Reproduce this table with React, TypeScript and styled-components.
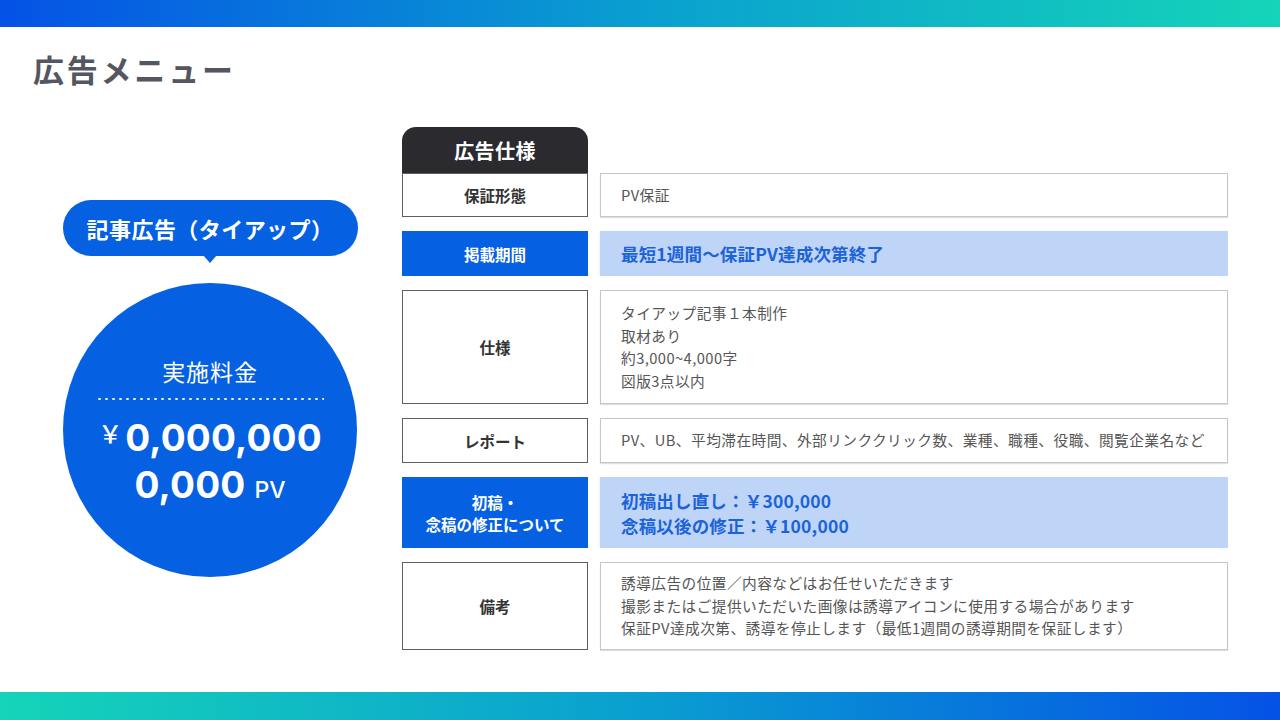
import React from "react";
import styled, { createGlobalStyle } from "styled-components";

const GlobalStyle = createGlobalStyle`
  html, body { margin: 0; padding: 0; background: #ffffff; }
  body { font-family: "Noto Sans CJK JP", "Noto Sans", sans-serif; }
  * { box-sizing: border-box; }
`;

const BLUE = "#0660e2";
const LIGHT_BLUE = "#bfd5f8";
const BLUE_TEXT = "#1c63d8";

const Page = styled.div`
  width: 1280px;
  height: 720px;
  display: flex;
  flex-direction: column;
  overflow: hidden;
  background: #fff;
`;

const Bar = styled.div<{ $reverse?: boolean }>`
  height: ${(p) => (p.$reverse ? 28 : 27)}px;
  flex: none;
  background: linear-gradient(
    90deg,
    ${(p) => (p.$reverse ? "#15d4b9, #0a9fd0 50%, #0552e6" : "#0552e6, #0a9fd0 50%, #15d4b9")}
  );
`;

const Spacer = styled.div`
  flex: 1;
`;

const Title = styled.h1`
  margin: 26px 0 0 33px;
  font-size: 31px;
  line-height: 32px;
  font-weight: 700;
  color: #55565f;
  letter-spacing: 0.09em;
`;

const Content = styled.div`
  display: flex;
  align-items: center;
  align-self: flex-start;
  gap: 45px;
  padding: 0 52px 0 63px;
  margin-top: 42px;
`;

const LeftCol = styled.div`
  width: 294px;
  display: flex;
  flex-direction: column;
  align-items: center;
  gap: 27px;
`;

const Badge = styled.div`
  position: relative;
  width: 295px;
  height: 56px;
  border-radius: 28px;
  background: ${BLUE};
  color: #fff;
  font-size: 22px;
  font-weight: 700;
  display: flex;
  align-items: center;
  justify-content: center;
  letter-spacing: 0.02em;

  &::after {
    content: "";
    position: absolute;
    left: 50%;
    bottom: -7px;
    transform: translateX(-50%);
    border-left: 7px solid transparent;
    border-right: 7px solid transparent;
    border-top: 8px solid ${BLUE};
  }
`;

const Circle = styled.div`
  width: 294px;
  height: 294px;
  border-radius: 50%;
  background: ${BLUE};
  color: #fff;
  display: flex;
  flex-direction: column;
  align-items: center;
  justify-content: center;
  padding-top: 2px;
`;

const FeeLabel = styled.div`
  font-size: 23px;
  line-height: 32px;
  font-weight: 400;
  letter-spacing: 0.04em;
`;

const Dots = styled.div`
  width: 228px;
  height: 4px;
  margin-top: 10px;
  background-image: radial-gradient(circle, rgba(255, 255, 255, 0.95) 1px, transparent 1.4px);
  background-size: 7px 4px;
  background-repeat: repeat-x;
`;

const PriceLine = styled.div<{ $first?: boolean }>`
  display: flex;
  align-items: flex-start;
  justify-content: center;
  margin-top: ${(p) => (p.$first ? 13 : 0)}px;
  height: 47px;
`;

const Yen = styled.span`
  font-family: "Noto Sans CJK JP", sans-serif;
  font-size: 24px;
  line-height: 24px;
  font-weight: 500;
  margin-top: 7px;
  margin-right: 3px;
`;

const Big = styled.span`
  font-family: Inter, "Noto Sans", sans-serif;
  font-size: 37px;
  line-height: 48px;
  font-weight: 700;
  letter-spacing: 0.005em;
`;

const Unit = styled.span`
  font-family: Inter, "Noto Sans", sans-serif;
  font-size: 23px;
  line-height: 24px;
  font-weight: 500;
  margin-top: 17px;
  margin-left: 9px;
`;

const Table = styled.div`
  width: 826px;
  display: flex;
  flex-direction: column;
`;

const Tab = styled.div`
  width: 186px;
  height: 46px;
  border-radius: 14px 14px 0 0;
  background: #2a2a2f;
  color: #fff;
  font-size: 20px;
  font-weight: 700;
  display: flex;
  align-items: center;
  justify-content: center;
  letter-spacing: 0.02em;
`;

const Rows = styled.div`
  display: flex;
  flex-direction: column;
  gap: 14px;
`;

const Row = styled.div<{ $h: number }>`
  display: grid;
  grid-template-columns: 186px 1fr;
  column-gap: 12px;
  height: ${(p) => p.$h}px;
`;

const Label = styled.div<{ $blue?: boolean }>`
  display: flex;
  align-items: center;
  justify-content: center;
  text-align: center;
  font-size: 15.5px;
  line-height: 22px;
  font-weight: 700;
  color: ${(p) => (p.$blue ? "#fff" : "#333")};
  background: ${(p) => (p.$blue ? BLUE : "#fff")};
  border: 1.5px solid ${(p) => (p.$blue ? BLUE : "#5f5f5f")};
`;

const Value = styled.div<{ $blue?: boolean }>`
  display: flex;
  flex-direction: column;
  justify-content: center;
  padding-left: 20px;
  font-size: ${(p) => (p.$blue ? 17.5 : 14.7)}px;
  line-height: ${(p) => (p.$blue ? 25 : 22.5)}px;
  font-weight: ${(p) => (p.$blue ? 700 : 400)};
  color: ${(p) => (p.$blue ? BLUE_TEXT : "#555")};
  background: ${(p) => (p.$blue ? LIGHT_BLUE : "#fff")};
  border: 1.5px solid ${(p) => (p.$blue ? LIGHT_BLUE : "#c6c6c6")};
  box-shadow: ${(p) => (p.$blue ? "-1px 0 2px rgba(0,0,0,0.05)" : "0 1px 1px rgba(0,0,0,0.12)")};
  letter-spacing: ${(p) => (p.$blue ? "0.01em" : "0.03em")};
`;

type Spec = { label: string[]; value: string[]; blue?: boolean; h: number };

const specs: Spec[] = [
  { label: ["保証形態"], value: ["PV保証"], h: 44 },
  { label: ["掲載期間"], value: ["最短1週間〜保証PV達成次第終了"], blue: true, h: 45 },
  {
    label: ["仕様"],
    value: ["タイアップ記事１本制作", "取材あり", "約3,000~4,000字", "図版3点以内"],
    h: 114,
  },
  {
    label: ["レポート"],
    value: ["PV、UB、平均滞在時間、外部リンククリック数、業種、職種、役職、閲覧企業名など"],
    h: 45,
  },
  {
    label: ["初稿・", "念稿の修正について"],
    value: ["初稿出し直し：￥300,000", "念稿以後の修正：￥100,000"],
    blue: true,
    h: 71,
  },
  {
    label: ["備考"],
    value: [
      "誘導広告の位置／内容などはお任せいただきます",
      "撮影またはご提供いただいた画像は誘導アイコンに使用する場合があります",
      "保証PV達成次第、誘導を停止します（最低1週間の誘導期間を保証します）",
    ],
    h: 88,
  },
];

export default function App() {
  return (
    <>
      <GlobalStyle />
      <Page>
        <Bar />
        <Title>広告メニュー</Title>
        <Content>
          <LeftCol>
            <Badge>記事広告（タイアップ）</Badge>
            <Circle>
              <FeeLabel>実施料金</FeeLabel>
              <Dots />
              <PriceLine $first>
                <Yen>￥</Yen>
                <Big>0,000,000</Big>
              </PriceLine>
              <PriceLine>
                <Big>0,000</Big>
                <Unit>PV</Unit>
              </PriceLine>
            </Circle>
          </LeftCol>
          <Table>
            <Tab>広告仕様</Tab>
            <Rows>
              {specs.map((s, i) => (
                <Row key={i} $h={s.h}>
                  <Label $blue={s.blue}>
                    <div>
                      {s.label.map((l, j) => (
                        <div key={j}>{l}</div>
                      ))}
                    </div>
                  </Label>
                  <Value $blue={s.blue}>
                    {s.value.map((v, j) => (
                      <div key={j}>{v}</div>
                    ))}
                  </Value>
                </Row>
              ))}
            </Rows>
          </Table>
        </Content>
        <Spacer />
        <Bar $reverse />
      </Page>
    </>
  );
}
